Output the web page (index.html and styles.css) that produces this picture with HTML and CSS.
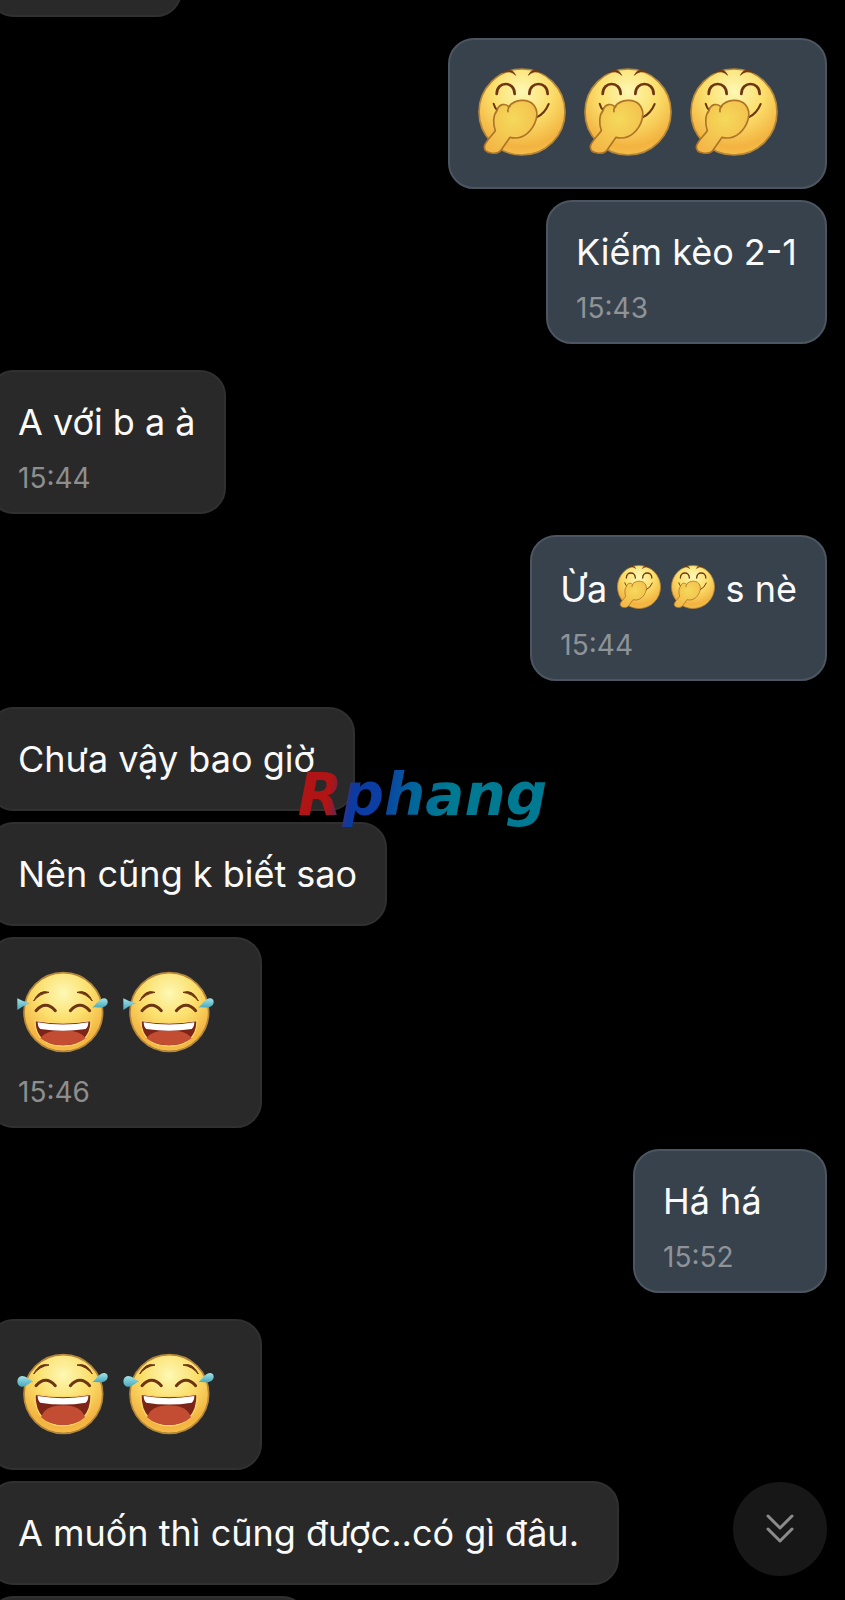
FILE: index.html
```html
<!DOCTYPE html>
<html lang="vi">
<head>
  <meta charset="UTF-8" />
  <meta name="viewport" content="width=device-width, initial-scale=1" />
  <title>Tin nhắn</title>
  <link rel="stylesheet" href="styles.css">
</head>
<body>
  <!-- Emoji -->
  <svg class="defs" width="0" height="0" aria-hidden="true">
    <defs>
      <radialGradient id="skin" cx="0.5" cy="0.26" r="0.76">
        <stop offset="0" stop-color="#fdf8b4" />
        <stop offset="0.45" stop-color="#fbdf6c" />
        <stop offset="0.85" stop-color="#f3b340" />
        <stop offset="1" stop-color="#f6c04c" />
      </radialGradient>
      <radialGradient id="hand" cx="0.55" cy="0.35" r="0.7">
        <stop offset="0" stop-color="#f5d95a" />
        <stop offset="1" stop-color="#f3b748" />
      </radialGradient>
      <linearGradient id="tear" x1="0" y1="0" x2="0" y2="1">
        <stop offset="0" stop-color="#a5e2e6" />
        <stop offset="1" stop-color="#45a9be" />
      </linearGradient>
    </defs>

    <symbol id="giggle" viewBox="0 0 264 264">
      <circle cx="132" cy="132" r="129" fill="url(#skin)" stroke="#b5873a" stroke-width="5" />
      <path d="M74 14Q102 -4 113 22Q98 6 74 14ZM151 22Q162 -4 192 14Q166 6 151 22Z" fill="#6e3513" stroke="#6e3513" stroke-width="2" stroke-linejoin="round" />
      <g fill="none" stroke="#6e3513" stroke-linecap="round">
        <path d="M56 78C56 38 110 38 110 78M154 78C154 38 209 38 209 78" stroke-width="8" />
        <path d="M47 107Q50 120 60 130M212 108Q200 137 176 148" stroke-width="6" />
      </g>
      <path d="M57 128C62 106 84 106 92 116C112 92 150 92 166 110C188 135 172 175 148 196C130 211 112 212 96 208L70 245C58 262 18 258 19 236C20 222 40 205 52 188C44 165 46 140 57 128Z" fill="url(#hand)" stroke="#ad7528" stroke-width="5" stroke-linejoin="round" />
      <path d="M96 114Q88 120 90 131" fill="none" stroke="#ad7528" stroke-width="5" stroke-linecap="round" />
    </symbol>

    <symbol id="laugh" viewBox="0 0 264 273" overflow="visible">
      <circle cx="133" cy="135" r="118" fill="url(#skin)" stroke="#b5873a" stroke-width="5" />
      <path d="M44 75Q60 40 90 48Q62 52 44 75ZM220 75Q204 40 174 48Q202 52 220 75Z" fill="#6e3513" stroke="#6e3513" stroke-width="3" stroke-linejoin="round" />
      <path d="M51 110Q80 78 109 110M154 110Q183 78 212 110" fill="none" stroke="#6e3513" stroke-width="9" stroke-linecap="round" />
      <path d="M48 136Q132 150 216 136C218 200 180 230 132 230C84 230 46 200 48 136Z" fill="#7c2417" stroke="#fbd86a" stroke-width="4" />
      <path d="M66 205Q78 169 132 169Q186 169 198 205Q174 228 132 228Q90 228 66 205Z" fill="#c24d33" />
      <path d="M56 141Q132 154 208 141Q208 155 200 161Q132 172 64 161Q56 155 56 141Z" fill="#fff" />
      <path d="M43 97C30 92 20 80 8 81C-10 84 -8 112 8 113C22 114 30 102 43 97Z" fill="url(#tear)" />
      <path d="M220 100C235 88 240 72 256 72C272 74 268 96 252 99C240 101 232 97 220 100Z" fill="url(#tear)" />
    </symbol>

    <symbol id="laugh-low" viewBox="0 0 264 273" overflow="visible">
      <circle cx="133" cy="135" r="118" fill="url(#skin)" stroke="#b5873a" stroke-width="5" />
      <path d="M44 102Q60 66 90 76Q62 80 44 102ZM220 102Q204 66 174 76Q202 80 220 102Z" fill="#6e3513" stroke="#6e3513" stroke-width="3" stroke-linejoin="round" />
      <path d="M51 131Q80 99 109 131M154 131Q183 99 212 131" fill="none" stroke="#6e3513" stroke-width="9" stroke-linecap="round" />
      <path d="M48 161Q132 175 216 161C216 214 180 237 132 237C84 237 48 214 48 161Z" fill="#7c2417" stroke="#fbd86a" stroke-width="4" />
      <path d="M64 214Q80 190 132 190Q184 190 200 214Q174 235 132 235Q90 235 64 214Z" fill="#c24d33" />
      <path d="M56 166Q132 179 208 166Q208 180 200 186Q132 196 64 186Q56 180 56 166Z" fill="#fff" />
      <path d="M-5 94Q12 104 33 109Q12 116 -5 129Z" fill="url(#tear)" />
      <path d="M220 122C235 110 240 94 256 94C272 96 268 118 252 121C240 123 232 119 220 122Z" fill="url(#tear)" />
    </symbol>
  </svg>

  <main class="chat">
    <div class="group theirs">
      <div class="bubble clipped-top"></div>
    </div>

    <div class="group mine">
      <div class="bubble">
        <div class="emojis">
          <svg class="emoji" role="img" aria-label="cười che miệng"><use href="#giggle" /></svg>
          <svg class="emoji" role="img" aria-label="cười che miệng"><use href="#giggle" /></svg>
          <svg class="emoji" role="img" aria-label="cười che miệng"><use href="#giggle" /></svg>
        </div>
      </div>
      <div class="bubble">
        <p>Kiếm kèo 2-1</p>
        <time>15:43</time>
      </div>
    </div>

    <div class="group theirs">
      <div class="bubble">
        <p>A với b a à</p>
        <time>15:44</time>
      </div>
    </div>

    <div class="group mine">
      <div class="bubble">
        <p>Ừa <svg class="emoji-small" viewBox="0 0 264 264" role="img" aria-label="cười che miệng"><use href="#giggle" /></svg> <svg class="emoji-small" viewBox="0 0 264 264" role="img" aria-label="cười che miệng"><use href="#giggle" /></svg> s nè</p>
        <time>15:44</time>
      </div>
    </div>

    <div class="group theirs">
      <div class="bubble">
        <p>Chưa vậy bao giờ&nbsp;</p>
      </div>
      <div class="bubble">
        <p>Nên cũng k biết sao</p>
      </div>
      <div class="bubble">
        <div class="emojis">
          <svg class="emoji" role="img" aria-label="cười ra nước mắt"><use href="#laugh-low" /></svg>
          <svg class="emoji" role="img" aria-label="cười ra nước mắt"><use href="#laugh-low" /></svg>
        </div>
        <time>15:46</time>
      </div>
    </div>

    <div class="group mine">
      <div class="bubble">
        <p>Há há</p>
        <time>15:52</time>
      </div>
    </div>

    <div class="group theirs">
      <div class="bubble">
        <div class="emojis">
          <svg class="emoji" role="img" aria-label="cười ra nước mắt"><use href="#laugh" /></svg>
          <svg class="emoji" role="img" aria-label="cười ra nước mắt"><use href="#laugh" /></svg>
        </div>
      </div>
      <div class="bubble">
        <p>A muốn thì cũng được..có gì đâu.&nbsp;</p>
      </div>
      <div class="bubble next"></div>
    </div>
  </main>

  <div class="watermark">Rphang</div>

  <button type="button" class="scroll-down" id="scrollDown" aria-label="Xuống cuối">
    <svg width="30" height="30" viewBox="0 0 30 30" fill="none" stroke="#8c8c8c" stroke-width="3" stroke-linecap="round" stroke-linejoin="round">
      <path d="M3 2L15 14L27 2M3 15L15 27L27 15" />
    </svg>
  </button>
</body>
</html>
```

FILE: styles.css
```css
* {
  box-sizing: border-box;
}
body {
  margin: 0;
  background: #000;
  color: #fafafa;
  font-family: Inter, Roboto, sans-serif;
  font-size: 36px;
  line-height: 44px;
}
.defs {
  position: absolute;
}

/* Chat */
.chat {
  height: 100vh;
  overflow: hidden;
  padding-right: 18px;
}
.group {
  display: flex;
  flex-direction: column;
  gap: 11px;
}
.theirs {
  align-items: flex-start;
  margin-left: -12px;
}
.mine {
  align-items: flex-end;
  margin-top: 21px;
}
.mine + .theirs {
  margin-top: 26px;
}

.bubble {
  min-width: 194px;
  padding: 28px;
  border: 2px solid #303030;
  border-radius: 26px;
  background: #292929;
}
.mine .bubble {
  background: #37424d;
  border-color: #4b5661;
}
.clipped-top {
  height: 104px;
  margin-top: -87px;
}
.next {
  width: 320px;
  height: 104px;
}
.bubble p {
  margin: 0;
}
.bubble time {
  display: block;
  margin: 18px 0 -10px;
  font-size: 28px;
  line-height: 32px;
  color: #8e8e8e;
}
.mine time {
  color: #8f9397;
}

.emojis {
  display: flex;
  gap: 18px;
  height: 91px;
  padding-right: 19px;
}
.theirs .emojis {
  padding-left: 1px;
}
.emoji {
  width: 88px;
  height: 91px;
  overflow: visible;
}
.mine .emoji {
  height: 88px;
}
.emoji-small {
  width: 44px;
  height: 44px;
  vertical-align: -7px;
}

/* Watermark */
.watermark {
  position: fixed;
  top: 50%;
  left: 50%;
  transform: translate(-50%, -50%);
  padding-bottom: 10px;
  font-family: "DejaVu Sans", sans-serif;
  font-size: 58px;
  font-weight: bold;
  font-style: italic;
  line-height: 68px;
  background: linear-gradient(100deg, #b01414 14%, #0c3aa0 23%, #0c3fa3 34%, #02659a 46%, #007a92 60%);
  -webkit-background-clip: text;
  background-clip: text;
  color: transparent;
  pointer-events: none;
}

.scroll-down {
  position: fixed;
  right: 18px;
  bottom: 24px;
  display: flex;
  align-items: center;
  justify-content: center;
  width: 94px;
  height: 94px;
  padding: 0;
  border: none;
  border-radius: 50%;
  background: #171717;
  cursor: pointer;
}
```
